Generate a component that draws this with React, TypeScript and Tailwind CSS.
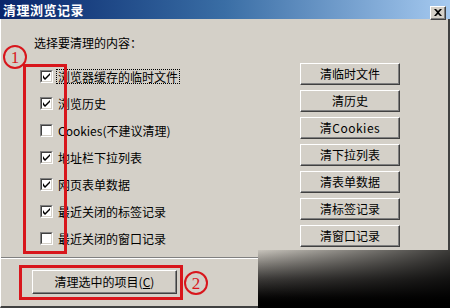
import React from 'react'

const rows = [
  { label: '浏览器缓存的临时文件', checked: true, button: '清临时文件', focus: true },
  { label: '浏览历史', checked: true, button: '清历史' },
  { label: 'Cookies(不建议清理)', checked: false, button: '清Cookies' },
  { label: '地址栏下拉列表', checked: true, button: '清下拉列表' },
  { label: '网页表单数据', checked: true, button: '清表单数据' },
  { label: '最近关闭的标签记录', checked: true, button: '清标签记录' },
  { label: '最近关闭的窗口记录', checked: false, button: '清窗口记录' },
]

const font = 'font-["SimSun","Noto_Sans_CJK_SC",sans-serif]'

function Checkbox({ checked }: { checked: boolean }) {
  return (
    <div className="w-[13px] h-[13px] border-t border-l border-[#808080] border-r border-b border-r-white border-b-white bg-white">
      <div className="w-full h-full border-t border-l border-[#404040] border-r border-b border-r-[#d4d0c8] border-b-[#d4d0c8] flex items-center justify-center">
        {checked && (
          <svg width="7" height="7" viewBox="0 0 7 7">
            <path d="M0 2 L0 5 L2 7 L7 2 L7 0 L2 5 Z" fill="#000" />
          </svg>
        )}
      </div>
    </div>
  )
}

function ClassicButton({ children, className = '' }: { children: React.ReactNode; className?: string }) {
  return (
    <div
      className={`flex items-center justify-center bg-[#d4d0c8] border-t border-l border-white border-r border-b border-r-[#404040] border-b-[#404040] shadow-[inset_-1px_-1px_#808080] text-[12px] text-black ${className}`}
    >
      {children}
    </div>
  )
}

export default function App() {
  return (
    <div className={`relative w-[450px] h-[308px] overflow-hidden bg-[#d4d0c8] ${font}`}>
      {/* title bar */}
      <div className="h-[19px] flex items-center justify-between pl-[3px] pr-[4px] bg-linear-to-r from-[#0a246a] via-[#3a6ea5] to-[#a6caf0]">
        <span className="text-white font-bold text-[13px] leading-none tracking-[0.5px]">清理浏览记录</span>
        <div className="mt-[6px] w-[16px] h-[14px] flex items-center justify-center bg-[#d4d0c8] border-t border-l border-white border-r border-b border-r-[#404040] border-b-[#404040] shadow-[inset_-1px_-1px_#808080]">
          <svg width="8" height="7" viewBox="0 0 8 7">
            <path d="M0 0 L2 0 L4 2 L6 0 L8 0 L5 3.5 L8 7 L6 7 L4 5 L2 7 L0 7 L3 3.5 Z" fill="#000" />
          </svg>
        </div>
      </div>

      {/* body */}
      <div className="h-[289px] border-r-2 border-r-[#404040] border-l border-l-white border-b-2 border-b-[#404040] flex flex-col">
        <div className="pl-[33px] pt-[17px] text-[12px] leading-[14px] text-black">选择要清理的内容：</div>

        <div className="mt-[13px] flex flex-col gap-[5px] pl-[39px] pr-[48px]">
          {rows.map(r => (
            <div key={r.button} className="h-[22px] flex items-center justify-between">
              <div className="flex items-center gap-[4px] pt-[4px]">
                <Checkbox checked={r.checked} />
                <span
                  className={`text-[12px] leading-[13px] text-black px-[1px] ${
                    r.focus ? 'outline outline-1 outline-dotted outline-black' : ''
                  }`}
                >
                  {r.label}
                </span>
              </div>
              <ClassicButton className="w-[100px] h-[22px]">
                <span className={r.button === '清Cookies' ? 'tracking-[0.5px]' : ''}>{r.button}</span>
              </ClassicButton>
            </div>
          ))}
        </div>

        <div className="mt-[10px] h-[2px] border-t border-[#808080] border-b border-b-white" />

        <div className="mt-[11px] pl-[31px]">
          <ClassicButton className="w-[145px] h-[24px]">
            清理选中的项目(<span className="underline">C</span>)
          </ClassicButton>
        </div>
      </div>

      {/* annotations */}
      <div className="absolute left-[23px] top-[64px] w-[44px] h-[190px] border-[3px] border-[#d8161c]" />
      <div className="absolute left-[19px] top-[265px] w-[164px] h-[35px] border-[3px] border-[#d8161c]" />
      <div className="absolute left-[3px] top-[45px] w-[24px] h-[24px] rounded-full border-2 border-[#d8161c] flex items-center justify-center text-[#d8161c] text-[17px] leading-none font-['Liberation_Serif',serif] bg-[#d4d0c8]">
        1
      </div>
      <div className="absolute left-[184px] top-[271px] w-[24px] h-[24px] rounded-full border-2 border-[#d8161c] flex items-center justify-center text-[#d8161c] text-[17px] leading-none font-['Liberation_Serif',serif]">
        2
      </div>

      {/* watermark fade */}
      <div className="absolute left-[258px] top-[250px] w-[192px] h-[58px] z-10 bg-linear-to-b from-[#c8c4bc] via-[#3c3a38] to-black">
        <div className="w-full h-full bg-linear-to-r from-transparent to-black/70" />
      </div>
    </div>
  )
}
